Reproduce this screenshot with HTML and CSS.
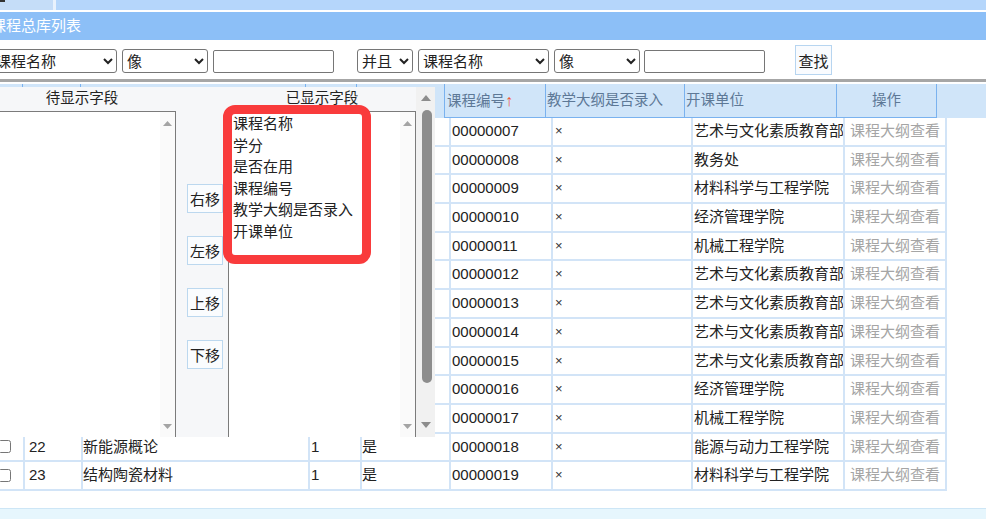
FILE: index.html
```html
<!DOCTYPE html>
<html lang="zh-CN">
<head>
<meta charset="utf-8">
<title>课程总库列表</title>
<link rel="stylesheet" href="styles.css">
</head>
<body>
<div class="tabstrip"><div class="tab"><span class="tab-mark"></span></div></div>
<div class="titlebar">课程总库列表</div>
<form class="search">
  <select class="sel sel-f1"><option>课程名称</option></select>
  <select class="sel sel-op"><option>像</option></select>
  <input class="kw" type="text">
  <select class="sel sel-and"><option>并且</option></select>
  <select class="sel sel-f2"><option>课程名称</option></select>
  <select class="sel sel-op"><option>像</option></select>
  <input class="kw kw2" type="text">
  <button type="button" class="btn-find">查找</button>
</form>

<div class="grid">
  <div class="ghead">
    <div class="h h0"></div>
    <div class="h h1"></div>
    <div class="h h2"></div>
    <div class="h h3"></div>
    <div class="h h4"></div>
    <div class="h ha">课程编号<span class="sort">↑</span></div>
    <div class="h hb">教学大纲是否录入</div>
    <div class="h hc">开课单位</div>
    <div class="h hd">操作</div>
  </div>
  <div class="gbody">
    <div class="row"><div class="c c0"><input type="checkbox"></div><div class="c c1">11</div><div class="c c2"></div><div class="c c3">1</div><div class="c c4">是</div><div class="c c5">00000007</div><div class="c c6">×</div><div class="c c7">艺术与文化素质教育部</div><div class="c c8">课程大纲查看</div></div>
    <div class="row"><div class="c c0"><input type="checkbox"></div><div class="c c1">12</div><div class="c c2"></div><div class="c c3">1</div><div class="c c4">是</div><div class="c c5">00000008</div><div class="c c6">×</div><div class="c c7">教务处</div><div class="c c8">课程大纲查看</div></div>
    <div class="row"><div class="c c0"><input type="checkbox"></div><div class="c c1">13</div><div class="c c2"></div><div class="c c3">1</div><div class="c c4">是</div><div class="c c5">00000009</div><div class="c c6">×</div><div class="c c7">材料科学与工程学院</div><div class="c c8">课程大纲查看</div></div>
    <div class="row"><div class="c c0"><input type="checkbox"></div><div class="c c1">14</div><div class="c c2"></div><div class="c c3">1</div><div class="c c4">是</div><div class="c c5">00000010</div><div class="c c6">×</div><div class="c c7">经济管理学院</div><div class="c c8">课程大纲查看</div></div>
    <div class="row"><div class="c c0"><input type="checkbox"></div><div class="c c1">15</div><div class="c c2"></div><div class="c c3">1</div><div class="c c4">是</div><div class="c c5">00000011</div><div class="c c6">×</div><div class="c c7">机械工程学院</div><div class="c c8">课程大纲查看</div></div>
    <div class="row"><div class="c c0"><input type="checkbox"></div><div class="c c1">16</div><div class="c c2"></div><div class="c c3">1</div><div class="c c4">是</div><div class="c c5">00000012</div><div class="c c6">×</div><div class="c c7">艺术与文化素质教育部</div><div class="c c8">课程大纲查看</div></div>
    <div class="row"><div class="c c0"><input type="checkbox"></div><div class="c c1">17</div><div class="c c2"></div><div class="c c3">1</div><div class="c c4">是</div><div class="c c5">00000013</div><div class="c c6">×</div><div class="c c7">艺术与文化素质教育部</div><div class="c c8">课程大纲查看</div></div>
    <div class="row"><div class="c c0"><input type="checkbox"></div><div class="c c1">18</div><div class="c c2"></div><div class="c c3">1</div><div class="c c4">是</div><div class="c c5">00000014</div><div class="c c6">×</div><div class="c c7">艺术与文化素质教育部</div><div class="c c8">课程大纲查看</div></div>
    <div class="row"><div class="c c0"><input type="checkbox"></div><div class="c c1">19</div><div class="c c2"></div><div class="c c3">1</div><div class="c c4">是</div><div class="c c5">00000015</div><div class="c c6">×</div><div class="c c7">艺术与文化素质教育部</div><div class="c c8">课程大纲查看</div></div>
    <div class="row"><div class="c c0"><input type="checkbox"></div><div class="c c1">20</div><div class="c c2"></div><div class="c c3">1</div><div class="c c4">是</div><div class="c c5">00000016</div><div class="c c6">×</div><div class="c c7">经济管理学院</div><div class="c c8">课程大纲查看</div></div>
    <div class="row"><div class="c c0"><input type="checkbox"></div><div class="c c1">21</div><div class="c c2"></div><div class="c c3">1</div><div class="c c4">是</div><div class="c c5">00000017</div><div class="c c6">×</div><div class="c c7">机械工程学院</div><div class="c c8">课程大纲查看</div></div>
    <div class="row"><div class="c c0"><input type="checkbox"></div><div class="c c1">22</div><div class="c c2">新能源概论</div><div class="c c3">1</div><div class="c c4">是</div><div class="c c5">00000018</div><div class="c c6">×</div><div class="c c7">能源与动力工程学院</div><div class="c c8">课程大纲查看</div></div>
    <div class="row"><div class="c c0"><input type="checkbox"></div><div class="c c1">23</div><div class="c c2">结构陶瓷材料</div><div class="c c3">1</div><div class="c c4">是</div><div class="c c5">00000019</div><div class="c c6">×</div><div class="c c7">材料科学与工程学院</div><div class="c c8">课程大纲查看</div></div>
  </div>

  <div class="fieldpanel">
    <div class="fp-main">
      <div class="fp-head">待显示字段</div>
      <div class="fp-head"></div>
      <div class="fp-head">已显示字段</div>
      <div class="listbox lb-left">
        <ul class="lb-items"></ul>
        <div class="lb-scroll">
          <svg width="9" height="5" viewBox="0 0 9 5"><polygon points="0,5 4.5,0 9,5" fill="#a4a4a4"/></svg>
          <svg width="9" height="5" viewBox="0 0 9 5"><polygon points="0,0 9,0 4.5,5" fill="#a4a4a4"/></svg>
        </div>
      </div>
      <div class="fp-btns">
        <button type="button" class="mv">右移</button>
        <button type="button" class="mv">左移</button>
        <button type="button" class="mv">上移</button>
        <button type="button" class="mv">下移</button>
      </div>
      <div class="listbox lb-right">
        <ul class="lb-items">
          <li>课程名称</li>
          <li>学分</li>
          <li>是否在用</li>
          <li>课程编号</li>
          <li>教学大纲是否录入</li>
          <li>开课单位</li>
        </ul>
        <div class="lb-scroll">
          <svg width="9" height="5" viewBox="0 0 9 5"><polygon points="0,5 4.5,0 9,5" fill="#a4a4a4"/></svg>
          <svg width="9" height="5" viewBox="0 0 9 5"><polygon points="0,0 9,0 4.5,5" fill="#a4a4a4"/></svg>
        </div>
      </div>
    </div>
    <div class="vscroll">
      <svg class="vs-up" width="10" height="6" viewBox="0 0 10 6"><polygon points="0,6 5,0 10,6" fill="#8c8c8c"/></svg>
      <div class="thumb"></div>
      <svg class="vs-down" width="10" height="6" viewBox="0 0 10 6"><polygon points="0,0 10,0 5,6" fill="#8c8c8c"/></svg>
    </div>
    <div class="highlight"></div>
  </div>
</div>

<div class="gap-below"></div>
<div class="pager"></div>
</body>
</html>
```

FILE: styles.css
```css
* { box-sizing: border-box; }
html, body { margin: 0; padding: 0; }
body {
  width: 986px;
  height: 519px;
  overflow: hidden;
  background: #fff;
  color: #222;
  font-family: "Liberation Sans", "Noto Sans CJK SC", sans-serif;
  font-size: 15px;
}

/* top tab strip */
.tabstrip {
  height: 12px;
  background: #b5d6fb;
  border-bottom: 2px solid #fff;
  display: flex;
}
.tab {
  width: 56px;
  height: 10px;
  background: #c5ddf8;
  border-right: 3px solid #e9f2fd;
  position: relative;
}
.tab-mark {
  position: absolute;
  left: 0;
  top: 0;
  width: 5px;
  height: 2px;
  background: #333;
}

/* title */
.titlebar {
  height: 28px;
  line-height: 28px;
  background: #8cbff7;
  color: #fff;
  font-size: 15px;
  margin-left: -9px;
}

/* search row */
.search {
  display: flex;
  align-items: flex-start;
  height: 42px;
  margin: 0;
  border-bottom: 3px solid #a6a6a6;
}
.sel {
  height: 24px;
  margin-top: 9px;
  font-family: "Liberation Sans", "Noto Sans CJK SC", sans-serif;
  font-size: 15px;
  color: #222;
  background: #fff;
  border: 1px solid #767676;
  border-radius: 3px;
}
.sel-f1 { margin-left: -9px; width: 126px; }
.sel-op { margin-left: 5px; width: 86px; }
.sel-and { margin-left: 23px; width: 56px; }
.sel-f2 { margin-left: 5px; width: 131px; }
.kw {
  margin-left: 5px;
  margin-top: 10px;
  width: 121px;
  height: 23px;
  border: 1px solid #767676;
  border-radius: 2px;
  font-size: 15px;
}
.kw2 { margin-left: 4px; }
.btn-find {
  margin-left: 30px;
  margin-top: 5px;
  width: 37px;
  height: 30px;
  padding: 0;
  background: #f9fbfe;
  border: 1px solid #b7d5f0;
  border-radius: 0;
  font-family: "Liberation Sans", "Noto Sans CJK SC", sans-serif;
  font-size: 15px;
  color: #222;
}

/* grid */
.grid {
  position: relative;
  margin-top: 2px;
}
.ghead {
  display: flex;
  height: 34px;
  background: #d0e5f9;
  color: #5d7896;
  font-size: 14.5px;
}
.h {
  height: 34px;
  line-height: 33px;
  white-space: nowrap;
  border-right: 1px solid #7ab2ef;
}
.h0 { width: 23px; }
.h1 { width: 58px; }
.h2 { width: 225px; }
.h3 { width: 51px; }
.h4 { width: 88px; }
.ha, .hb, .hc, .hd { border-bottom: 1px solid #7ab2ef; }
.ha { width: 101px; padding-left: 2px; }
.hb { width: 139px; padding-left: 1px; }
.hc { width: 152px; padding-left: 1px; }
.hd { width: 100px; text-align: center; }
.sort {
  color: #ee5a3c;
  font-size: 16px;
  font-weight: bold;
}

.row {
  display: flex;
  height: 28.7px;
}
.c {
  height: 28.7px;
  line-height: 26.7px;
  border-right: 2px solid #d2e4f7;
  border-bottom: 2px solid #d2e4f7;
  white-space: nowrap;
  overflow: hidden;
}
.c0 { width: 25px; display: flex; align-items: center; }
.c0 input { margin: 0 0 0 -2px; width: 13px; height: 13px; }
.c1 { width: 58px; padding-left: 4px; }
.c2 { width: 227px; }
.c3 { width: 52px; padding-left: 1px; }
.c4 { width: 89px; }
.c5 { width: 102px; padding-left: 1px; }
.c6 { width: 140px; padding-left: 2px; font-size: 13px; color: #333; }
.c7 { width: 152px; padding-left: 1px; }
.c8 { width: 102px; text-align: center; color: #a5a5a5; }

/* field chooser panel (overlays the grid) */
.fieldpanel {
  position: absolute;
  left: -12px;
  top: 3px;
  width: 447px;
  height: 350px;
  display: flex;
  background: #f6f7f9;
  overflow: hidden;
}
.fp-main {
  display: grid;
  grid-template-columns: 188px 52px 188px;
  grid-template-rows: 24px 326px;
  width: 428px;
}
.fp-head {
  text-align: center;
  line-height: 22px;
  font-size: 14.5px;
  color: #222;
}
.listbox {
  display: flex;
  background: #fff;
  border-top: 1px solid #7b7b7b;
  border-right: 1px solid #7b7b7b;
}
.lb-right { border-left: 1px solid #7b7b7b; }
.lb-items {
  flex: 1;
  list-style: none;
  margin: 0;
  padding: 1px 0 0 4px;
}
.lb-items li {
  line-height: 21.6px;
  font-size: 15px;
}
.lb-scroll {
  width: 15px;
  background: #fafafa;
  display: flex;
  flex-direction: column;
  align-items: center;
  justify-content: space-between;
  padding: 9px 0 8px;
}
.fp-btns {
  display: flex;
  flex-direction: column;
  align-items: flex-start;
  gap: 23px;
  padding: 73px 0 0 11px;
}
.mv {
  width: 36px;
  height: 29px;
  padding: 0;
  background: #fafcfe;
  border: 1px solid #bcd8ef;
  border-radius: 0;
  font-family: "Liberation Sans", "Noto Sans CJK SC", sans-serif;
  font-size: 15px;
  color: #222;
}
.vscroll {
  width: 19px;
  background: #f1f1f1;
  display: flex;
  flex-direction: column;
  align-items: center;
  padding-top: 8px;
}
.thumb {
  width: 10px;
  height: 273px;
  margin-top: 9px;
  margin-left: 2px;
  border-radius: 5px;
  background: #8d8d8d;
}
.vs-down { margin-top: 39px; }
.highlight {
  position: absolute;
  left: 235px;
  top: 18px;
  width: 148px;
  height: 159px;
  border: 9px solid #f93b3c;
  border-radius: 12px;
}

.gap-below { height: 17px; }
.pager {
  height: 20px;
  background: #e6f6fd;
  border-top: 1px solid #cde6f6;
}
```
